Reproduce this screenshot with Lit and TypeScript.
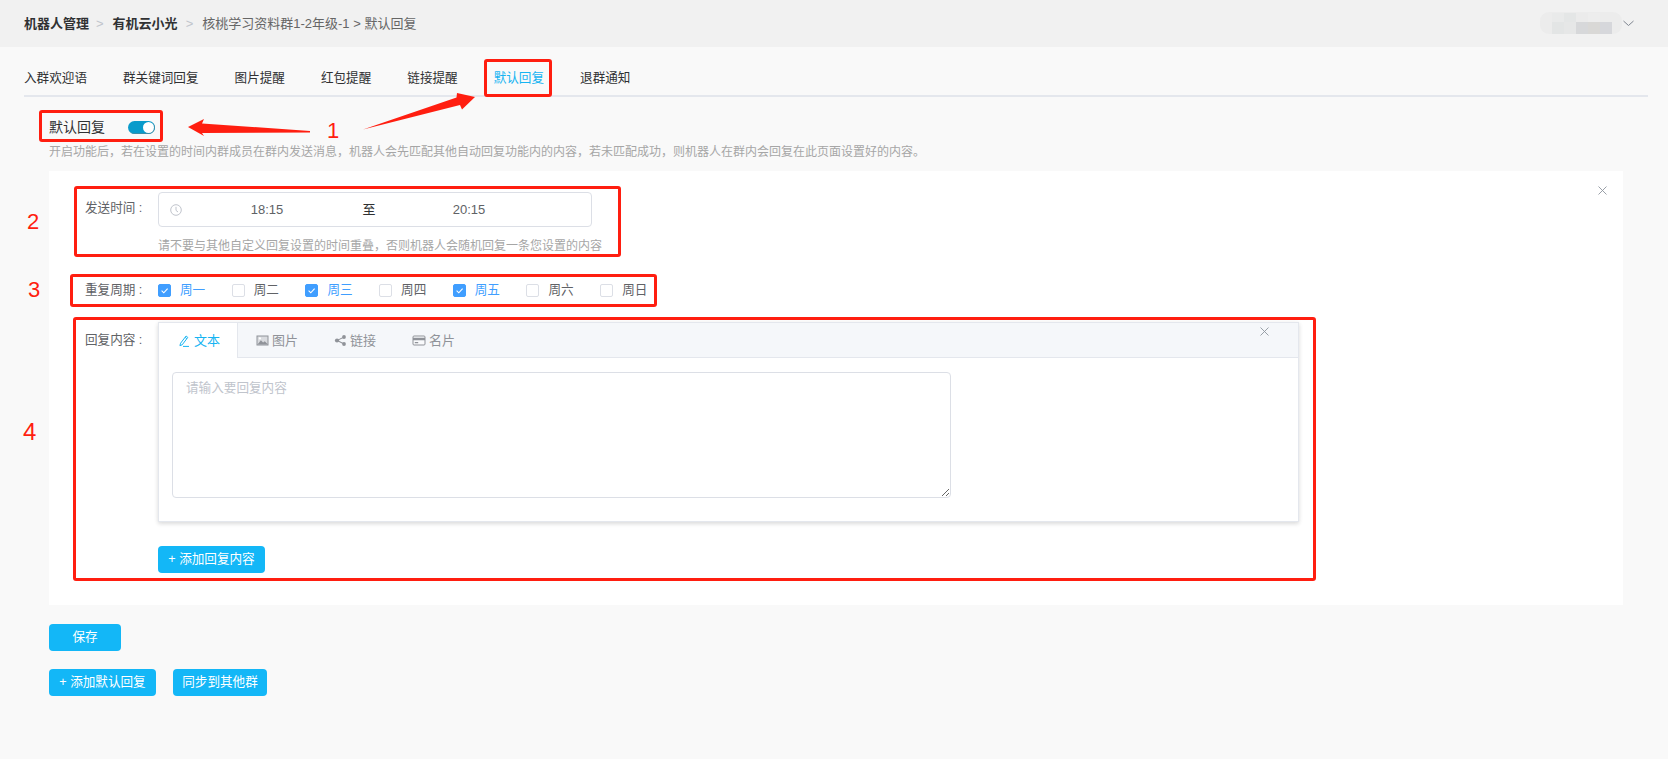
import { LitElement, html, css, svg } from "lit";
import { customElement } from "lit/decorators.js";

const DAYS: [string, boolean][] = [
  ["周一", true], ["周二", false], ["周三", true], ["周四", false],
  ["周五", true], ["周六", false], ["周日", false],
];
const TABS = ["入群欢迎语", "群关键词回复", "图片提醒", "红包提醒", "链接提醒", "默认回复", "退群通知"];
const MOSAIC = ["#e9eaea", "#e4e6e6", "#ebebeb", "#ededed", "#ececec", "#e3e5e5", "#e6e7e7", "#d7d8da", "#d9d8d6", "#d6d7db"];

const closeIcon = html`<svg class="x-icon" viewBox="0 0 9 9" width="9" height="9"><path d="M.5.5l8 8M8.5.5l-8 8" fill="none" stroke="#8f959e" stroke-width=".9"/></svg>`;

const pencil = svg`<path d="M3.6 9.2L2.9 11.6 5.2 10.8 10.8 3.4 9.1 2 3.6 9.2zM8.1 3.3L9.9 4.7M6 12.4H12" fill="none" stroke="currentColor" stroke-width="1"/>`;
const picture = svg`<rect x="1" y="2" width="11" height="9" fill="currentColor" fill-opacity=".28" stroke="currentColor"/><path d="M1.500 10.500l3.400-4.300 2.200 2.400 1.700-1.400 3.200 3.300z" fill="currentColor"/><circle cx="3.900" cy="4.400" r="1.100" fill="#fff"/>`;
const share = svg`<g fill="currentColor"><circle cx="3" cy="6.500" r="2.100"/><circle cx="10" cy="3" r="1.900"/><circle cx="10" cy="10" r="1.900"/><path d="M3 6l7-3.400.4.800-7 3.400zM3.400 6.100l7 3.400-.4.900-7-3.400z"/></g>`;
const card = svg`<rect x="1" y="2" width="12" height="9" rx="1" fill="#fff" fill-opacity=".4" stroke="currentColor"/><path d="M1 3.800h12v2.400H1zM2.800 8h3.400v1.200H2.800z" fill="currentColor"/>`;

@customElement("app-root")
export class AppRoot extends LitElement {
  static styles = css`
    :host {
      display: block;
      position: relative;
      min-height: 759px;
      overflow: hidden;
      background: #f9f9f9;
      color: #606266;
      font: 12.6px/20px "Liberation Sans", "Noto Sans CJK SC", sans-serif;
    }
    .header {
      height: 47px;
      padding: 0 34px 0 24px;
      background: #f1f1f1;
      display: flex;
      align-items: center;
      justify-content: space-between;
      box-sizing: border-box;
      font-size: 13px;
    }
    .crumbs { display: flex; align-items: center; color: #666; }
    .crumbs b { color: #303133; font-weight: 700; }
    .sep1 { color: #c0c4cc; margin: 0 9px 0 7px; }
    .sep2 { color: #c0c4cc; margin: 0 9px 0 8px; }
    .user { display: flex; align-items: center; margin-top: -1px; }
    .blur {
      width: 82px;
      height: 22px;
      box-sizing: border-box;
      padding: 1px 10px 0 12px;
      background: #ececec;
      border-radius: 9px;
      display: grid;
      grid-template-columns: repeat(5, 12px);
      grid-template-rows: 9px 12px;
    }
    .chev { margin-left: 1px; }

    .tabs {
      margin: 21px 20px 0 24px;
      padding-bottom: 7px;
      border-bottom: 2px solid #e4e7ed;
      display: flex;
      gap: 36px;
      color: #303133;
    }
    .tab-on { color: #16b4f2; }

    .main { padding: 0 45px 0 49px; }
    .switch-row { display: flex; align-items: center; margin-top: 20px; color: #303133; font-size: 14px; }
    .switch {
      margin-left: 23px;
      width: 27px;
      height: 13px;
      box-sizing: border-box;
      padding: 1px;
      border-radius: 7px;
      background: #0a9bcb;
      display: flex;
      justify-content: flex-end;
      box-shadow: inset -1px -1px 0 #3d8ea8;
    }
    .knob { width: 11px; height: 11px; border-radius: 50%; background: #fff; }
    .desc { margin-top: 6px; font-size: 12px; line-height: 18px; color: #a6a6a6; white-space: nowrap; }

    .panel {
      position: relative;
      margin-top: 10px;
      background: #fff;
      padding: 21px 0 32px 36px;
    }
    .panel-close { position: absolute; top: 15px; right: 16px; line-height: 0; }
    .x-icon { display: block; }
    .field { display: flex; }
    .label { width: 73px; flex: none; white-space: nowrap; }
    .label-time { line-height: 33px; }
    .label-reply { line-height: 36px; }
    .range {
      width: 434px;
      height: 35px;
      box-sizing: border-box;
      border: 1px solid #dcdfe6;
      border-radius: 4px;
      display: grid;
      grid-template-columns: 23px 170px 34px 166px;
      align-items: center;
      justify-items: center;
      font-size: 13px;
    }
    .clock { justify-self: end; }
    .range-sep { color: #303133; }
    .hint {
      margin: 10px 0 0 73px;
      font-size: 12px;
      line-height: 18px;
      color: #a6a6a6;
      white-space: nowrap;
    }
    .days { margin-top: 25px; align-items: center; }
    .day { width: 73.7px; display: flex; align-items: center; gap: 9px; }
    .box {
      width: 13px;
      height: 13px;
      box-sizing: border-box;
      border: 1px solid #dcdfe6;
      border-radius: 2px;
      background: #fff;
      line-height: 0;
    }
    .day-on { color: #409eff; }
    .day-on .box { background: #409eff; border-color: #409eff; }

    .reply { margin-top: 22px; }
    .reply-main { width: 1141px; }
    .card {
      box-sizing: border-box;
      height: 200px;
      border: 1px solid #e4e7ed;
      background: #fff;
      box-shadow: 0 2px 4px rgba(0, 0, 0, .12), 0 0 6px rgba(0, 0, 0, .04);
    }
    .card-tabs {
      height: 35px;
      box-sizing: border-box;
      display: flex;
      background: #f5f7fa;
      border-bottom: 1px solid #e4e7ed;
      color: #909399;
      font-size: 13px;
    }
    .ct { display: flex; align-items: center; padding: 0 18px; gap: 3px; height: 35px; box-sizing: border-box; }
    .ct svg { flex: none; }
    .ct-on {
      background: #fff;
      color: #16b4f2;
      padding: 0 17px 0 18px;
      gap: 4px;
      border-right: 1px solid #e4e7ed;
    }
    .card-close { margin: 4px 29px 0 auto; }
    .card-body { padding: 14px 13px; }
    textarea {
      display: block;
      width: 779px;
      height: 126px;
      box-sizing: border-box;
      margin: 0;
      border: 1px solid #dcdfe6;
      border-radius: 4px;
      padding: 5px 13px;
      font: 12.6px/20px "Liberation Sans", "Noto Sans CJK SC", sans-serif;
      color: #606266;
      background: #fff;
      outline: none;
    }
    textarea::placeholder { color: #c0c4cc; opacity: 1; }
    .btn {
      display: inline-block;
      height: 27px;
      width: 107px;
      box-sizing: border-box;
      padding: 0 0 2px;
      border: 0;
      border-radius: 4px;
      background: #13b7f7;
      color: #fff;
      font: 12.6px/20px "Liberation Sans", "Noto Sans CJK SC", sans-serif;
      text-align: center;
      white-space: nowrap;
    }
    .btn-add { margin-top: 24px; display: block; }
    .btn-save { width: 72px; display: block; margin-top: 19px; }
    .btn-sync { width: 94px; }
    .actions { display: flex; gap: 17px; margin-top: 18px; }

    .notes { position: absolute; inset: 0; pointer-events: none; }
    .arrows { position: absolute; left: 0; top: 0; }
    .mark { position: absolute; box-sizing: border-box; border: 3px solid #ff1e10; border-radius: 3px; }
    .m-tab { left: 484px; top: 59px; width: 68px; height: 38px; }
    .m-switch { left: 39px; top: 110px; width: 124px; height: 32px; }
    .m-time { left: 74px; top: 186px; width: 547px; height: 71px; }
    .m-days { left: 70px; top: 274px; width: 587px; height: 33px; }
    .m-reply { left: 73px; top: 317px; width: 1243px; height: 264px; }
    .num { position: absolute; color: #ff1e10; font-size: 22px; line-height: 26px; }
    .n1 { left: 327px; top: 118px; }
    .n2 { left: 27px; top: 209px; }
    .n3 { left: 28px; top: 277px; }
    .n4 { left: 23px; top: 419px; font-size: 24px; }
  `;

  render() {
    return html`
      <div class="header">
        <div class="crumbs">
          <b>机器人管理</b><span class="sep1">&gt;</span>
          <b>有机云小光</b><span class="sep2">&gt;</span>
          <span>核桃学习资料群1-2年级-1 &gt; 默认回复</span>
        </div>
        <div class="user">
          <div class="blur">${MOSAIC.map((c) => html`<i style="background:${c}"></i>`)}</div>
          <svg class="chev" width="11" height="7" viewBox="0 0 11 7"><path d="M.5 1l5 4.500 5-4.500" fill="none" stroke="#7f8590" stroke-width="1"/></svg>
        </div>
      </div>

      <div class="tabs">
        ${TABS.map((t) => html`<span class=${t === "默认回复" ? "tab-on" : ""}>${t}</span>`)}
      </div>

      <div class="main">
        <div class="switch-row">默认回复<span class="switch"><span class="knob"></span></span></div>
        <div class="desc">开启功能后，若在设置的时间内群成员在群内发送消息，机器人会先匹配其他自动回复功能内的内容，若未匹配成功，则机器人在群内会回复在此页面设置好的内容。</div>

        <div class="panel">
          <span class="panel-close">${closeIcon}</span>
          <div class="field">
            <span class="label label-time">发送时间 :</span>
            <div class="range">
              <svg class="clock" width="12" height="12" viewBox="0 0 12 12"><circle cx="6" cy="6" r="5.300" fill="none" stroke="#c0c4cc"/><path d="M6 2.800V6.400L8 8" fill="none" stroke="#c0c4cc"/></svg>
              <span>18:15</span><span class="range-sep">至</span><span>20:15</span>
            </div>
          </div>
          <div class="hint">请不要与其他自定义回复设置的时间重叠，否则机器人会随机回复一条您设置的内容</div>

          <div class="field days">
            <span class="label">重复周期 :</span>
            ${DAYS.map(([d, on]) => html`
              <span class="day ${on ? "day-on" : ""}">
                <span class="box">${on ? html`<svg width="11" height="11" viewBox="0 0 11 11"><path d="M2.600 5.600l2.200 2.200 3.800-4.200" fill="none" stroke="#fff" stroke-width="1.100"/></svg>` : ""}</span>${d}
              </span>`)}
          </div>

          <div class="field reply">
            <span class="label label-reply">回复内容 :</span>
            <div class="reply-main">
              <div class="card">
                <div class="card-tabs">
                  <span class="ct ct-on"><svg width="13" height="13" viewBox="0 0 13 13">${pencil}</svg>文本</span>
                  <span class="ct"><svg width="13" height="13" viewBox="0 0 13 13">${picture}</svg>图片</span>
                  <span class="ct"><svg width="13" height="13" viewBox="0 0 13 13">${share}</svg>链接</span>
                  <span class="ct"><svg width="14" height="13" viewBox="0 0 14 13">${card}</svg>名片</span>
                  <span class="card-close">${closeIcon}</span>
                </div>
                <div class="card-body"><textarea placeholder="请输入要回复内容"></textarea></div>
              </div>
              <button class="btn btn-add">+ 添加回复内容</button>
            </div>
          </div>
        </div>

        <button class="btn btn-save">保存</button>
        <div class="actions">
          <button class="btn">+ 添加默认回复</button>
          <button class="btn btn-sync">同步到其他群</button>
        </div>
      </div>

      <div class="notes">
        <span class="mark m-tab"></span>
        <span class="mark m-switch"></span>
        <span class="mark m-time"></span>
        <span class="mark m-days"></span>
        <span class="mark m-reply"></span>
        <svg class="arrows" width="1668" height="759" viewBox="0 0 1668 759">
          <path fill="#ff1e10" d="M188 127L204 119 202 123.500 310 131 310 132.500 202 133 204 136zM363 129.500L456.500 97.500 457 93 475 97 462 109.500 460 105z"/>
        </svg>
        <span class="num n1">1</span>
        <span class="num n2">2</span>
        <span class="num n3">3</span>
        <span class="num n4">4</span>
      </div>
    `;
  }
}
